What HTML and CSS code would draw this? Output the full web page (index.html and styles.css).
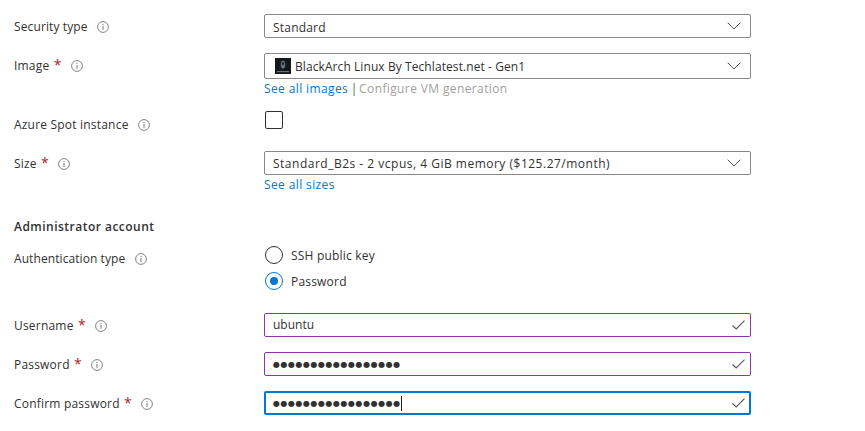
FILE: index.html
```html
<!DOCTYPE html>
<html lang="en">
<head>
    <meta charset="UTF-8">
    <title>Create a virtual machine</title>
    <link rel="stylesheet" href="styles.css">
</head>
<body>
    <svg class="icon-defs" width="0" height="0">
        <symbol id="info" viewBox="0 0 12 12">
            <circle cx="6" cy="6" r="5.4" fill="none" stroke="#777" stroke-width="0.9"/>
            <rect x="5.5" y="5" width="1" height="3.8" fill="#777"/>
            <rect x="5.5" y="3" width="1" height="1.1" fill="#777"/>
        </symbol>
        <symbol id="chevron" viewBox="0 0 14 8">
            <path d="M0.7 0.7 L7 7 L13.3 0.7" fill="none" stroke="#555" stroke-width="1"/>
        </symbol>
        <symbol id="check" viewBox="0 0 13 10">
            <path d="M0.5 5.5 L4.2 9 L12.5 0.6" fill="none" stroke="#555" stroke-width="1.1"/>
        </symbol>
    </svg>

    <div class="form">
        <div class="row row-security">
            <div class="label">Security type <svg class="info"><use href="#info"/></svg></div>
            <div class="field">
                <div class="box">
                    <span class="value">Standard</span>
                    <svg class="chevron"><use href="#chevron"/></svg>
                </div>
            </div>
        </div>

        <div class="row row-image">
            <div class="label">Image <span class="req">*</span> <svg class="info"><use href="#info"/></svg></div>
            <div class="field">
                <div class="box box-tall">
                    <svg class="thumb" viewBox="0 0 16 16">
                        <rect width="16" height="16" fill="#14171c"/>
                        <ellipse cx="8" cy="6.5" rx="2.2" ry="4" fill="#6d7686"/>
                        <ellipse cx="8" cy="5.5" rx="1" ry="2" fill="#1c2027"/>
                        <rect x="2" y="13" width="12" height="1.2" fill="#6f7276"/>
                    </svg>
                    <span class="value value-image">BlackArch Linux By Techlatest.net - Gen1</span>
                    <svg class="chevron"><use href="#chevron"/></svg>
                </div>
                <div class="links"><a class="link">See all images</a> <span class="sep">|</span> <span class="muted">Configure VM generation</span></div>
            </div>
        </div>

        <div class="row row-spot">
            <div class="label">Azure Spot instance <svg class="info"><use href="#info"/></svg></div>
            <div class="field">
                <div class="checkbox"></div>
            </div>
        </div>

        <div class="row row-size">
            <div class="label">Size <span class="req">*</span> <svg class="info"><use href="#info"/></svg></div>
            <div class="field">
                <div class="box">
                    <span class="value value-size">Standard_B2s - 2 vcpus, 4 GiB memory ($125.27/month)</span>
                    <svg class="chevron"><use href="#chevron"/></svg>
                </div>
                <div class="links"><a class="link">See all sizes</a></div>
            </div>
        </div>

        <h3 class="heading">Administrator account</h3>

        <div class="row row-auth">
            <div class="label">Authentication type <svg class="info"><use href="#info"/></svg></div>
            <div class="field radios">
                <div class="radio-item"><span class="radio"></span>SSH public key</div>
                <div class="radio-item"><span class="radio radio-on"></span>Password</div>
            </div>
        </div>

        <div class="row row-user">
            <div class="label">Username <span class="req">*</span> <svg class="info"><use href="#info"/></svg></div>
            <div class="field">
                <div class="box box-edited">
                    <span class="value value-user">ubuntu</span>
                    <svg class="check"><use href="#check"/></svg>
                </div>
            </div>
        </div>

        <div class="row row-pass">
            <div class="label">Password <span class="req">*</span> <svg class="info"><use href="#info"/></svg></div>
            <div class="field">
                <div class="box box-edited">
                    <span class="value dots">●●●●●●●●●●●●●●●●●</span>
                    <svg class="check"><use href="#check"/></svg>
                </div>
            </div>
        </div>

        <div class="row row-pass">
            <div class="label">Confirm password <span class="req">*</span> <svg class="info"><use href="#info"/></svg></div>
            <div class="field">
                <div class="box box-focus">
                    <span class="value dots">●●●●●●●●●●●●●●●●●</span><span class="caret"></span>
                    <svg class="check"><use href="#check"/></svg>
                </div>
            </div>
        </div>
    </div>
</body>
</html>
```

FILE: styles.css
```css
html, body {
    margin: 0;
    padding: 0;
    background: #ffffff;
}
body {
    font-family: "Open Sans", "Noto Sans", sans-serif;
    font-size: 12px;
    letter-spacing: 0.2px;
    color: #323130;
    overflow: hidden;
}
.icon-defs {
    position: absolute;
}
.form {
    padding: 14px 0 0 14px;
}
.row {
    display: flex;
    align-items: flex-start;
}
.label {
    width: 250px;
    height: 24px;
    line-height: 25px;
    white-space: nowrap;
}
.field {
    width: 487px;
}
.req {
    color: #a4262c;
    font-size: 14px;
    line-height: 12px;
    margin-left: 1px;
}
.info {
    width: 12px;
    height: 12px;
    margin-left: 6px;
    vertical-align: -2px;
}

/* Select and text boxes */
.box {
    display: flex;
    align-items: center;
    box-sizing: border-box;
    height: 24px;
    padding: 0 11px 0 8px;
    border: 1px solid #8a8886;
    border-radius: 2px;
}
.box-tall {
    height: 26px;
    padding-left: 10px;
}
.box-edited {
    border-color: #8f35aa;
}
.box-focus {
    border: 2px solid #0078d4;
    padding: 0 10px 0 7px;
}
.value {
    white-space: nowrap;
}
.value-image {
    letter-spacing: 0.08px;
}
.value-size {
    letter-spacing: 0.5px;
}
.value-user {
    letter-spacing: 0;
    padding-bottom: 2px;
}
.dots {
    font-family: "DejaVu Sans", sans-serif;
    font-size: 8px;
    letter-spacing: 0.53px;
}
.caret {
    width: 1px;
    height: 15px;
    background: #201f1e;
}
.chevron {
    width: 14px;
    height: 8px;
    margin-left: auto;
    margin-right: -2px;
}
.check {
    width: 13px;
    height: 10px;
    margin-left: auto;
    margin-right: -6px;
}
.thumb {
    width: 16px;
    height: 16px;
    margin-right: 4px;
    flex-shrink: 0;
}

.links {
    height: 18px;
    line-height: 18px;
    margin-top: 1px;
    letter-spacing: 0.38px;
}
.link {
    color: #0078d4;
}
.sep {
    color: #605e5c;
    margin: 0 -2px 0 -1px;
}
.muted {
    color: #a19f9d;
}

.checkbox {
    box-sizing: border-box;
    width: 18px;
    height: 18px;
    margin-left: 1px;
    border: 1px solid #323130;
    border-radius: 2px;
}

.heading {
    font-size: 12px;
    font-weight: 600;
    line-height: 18px;
    letter-spacing: 0.48px;
    margin: 24px 0 0;
}

.radios {
    display: flex;
    flex-direction: column;
    gap: 8px;
}
.radio-item {
    display: flex;
    align-items: center;
    height: 18px;
}
.radio {
    box-sizing: border-box;
    position: relative;
    width: 18px;
    height: 18px;
    margin: 0 8px 0 1px;
    border: 1px solid #323130;
    border-radius: 50%;
}
.radio-on {
    border-color: #0078d4;
}
.radio-on::after {
    content: "";
    position: absolute;
    left: 4px;
    top: 4px;
    width: 8px;
    height: 8px;
    border-radius: 50%;
    background: #0078d4;
}

.row-security { margin-bottom: 15px; }
.row-security .label { letter-spacing: 0.12px; }
.row-security .value { padding-top: 2px; }
.row-image { margin-bottom: 13px; }
.row-image .label { line-height: 26px; }
.row-spot { height: 22px; margin-bottom: 18px; }
.row-spot .label { line-height: 27px; }
.row-auth { margin-top: 10px; }
.row-auth .label { letter-spacing: 0.08px; }
.row-user { margin-top: 23px; }
.row-pass { margin-top: 15px; }
```
